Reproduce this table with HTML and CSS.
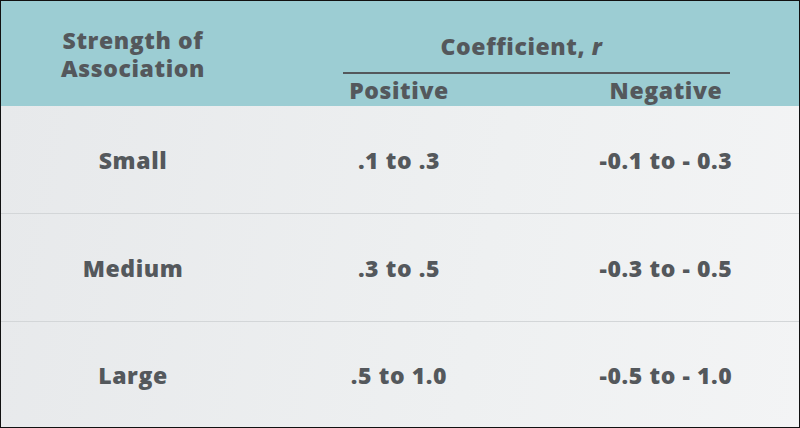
FILE: index.html
```html
<!DOCTYPE html>
<html>
<head>
<meta charset="utf-8">
<link rel="stylesheet" href="styles.css">
</head>
<body>
<div class="slide">
  <div class="head">
    <div class="c1 hl">Strength of<br>Association</div>
    <div class="coef">
      <div class="coef-title">Coefficient, <i>r</i></div>
      <div class="rule"></div>
      <div class="subs">
        <div class="c2">Positive</div>
        <div class="c3">Negative</div>
      </div>
    </div>
  </div>
  <div class="body">
    <div class="row"><div class="c1">Small</div><div class="c2">.1 to .3</div><div class="c3">-0.1 to - 0.3</div></div>
    <div class="row"><div class="c1">Medium</div><div class="c2">.3 to .5</div><div class="c3">-0.3 to - 0.5</div></div>
    <div class="row last"><div class="c1">Large</div><div class="c2">.5 to 1.0</div><div class="c3">-0.5 to - 1.0</div></div>
  </div>
</div>
</body>
</html>
```
FILE: styles.css
```css
html, body { margin: 0; padding: 0; }
body { width: 800px; height: 428px; overflow: hidden; }
.slide {
  box-sizing: border-box;
  width: 800px; height: 428px;
  border: 1px solid #111;
  display: flex; flex-direction: column;
  font-family: "Open Sans", sans-serif;
  font-weight: 800;
  font-size: 23px;
  line-height: 28px;
  letter-spacing: 0.6px;
  color: #54585c;
}
.head {
  height: 105px;
  background: #9ccdd3;
  display: flex;
}
.c1 { width: 264px; text-align: center; }
.c2 { width: 268px; text-align: center; }
.c3 { flex: 1; text-align: center; }
.hl { padding-top: 25px; }
.coef { flex: 1; display: flex; flex-direction: column; }
.coef-title { padding-top: 31px; margin-left: 78px; margin-right: 69px; padding-right: 30px; text-align: center; }
.coef-title i { font-style: italic; }
.rule { height: 2px; background: #54585c; margin: 12px 69px 0 78px; }
.subs { display: flex; margin-top: 2px; }
.body {
  flex: 1;
  display: flex; flex-direction: column;
  background: linear-gradient(100deg, #e7e9eb 0%, #eef0f1 60%, #f3f4f5 100%);
}
.row {
  height: 107px;
  border-bottom: 1px solid #d3d6d8;
  display: flex; align-items: center;
}
.row.last { border-bottom: none; flex: 1; }
```
